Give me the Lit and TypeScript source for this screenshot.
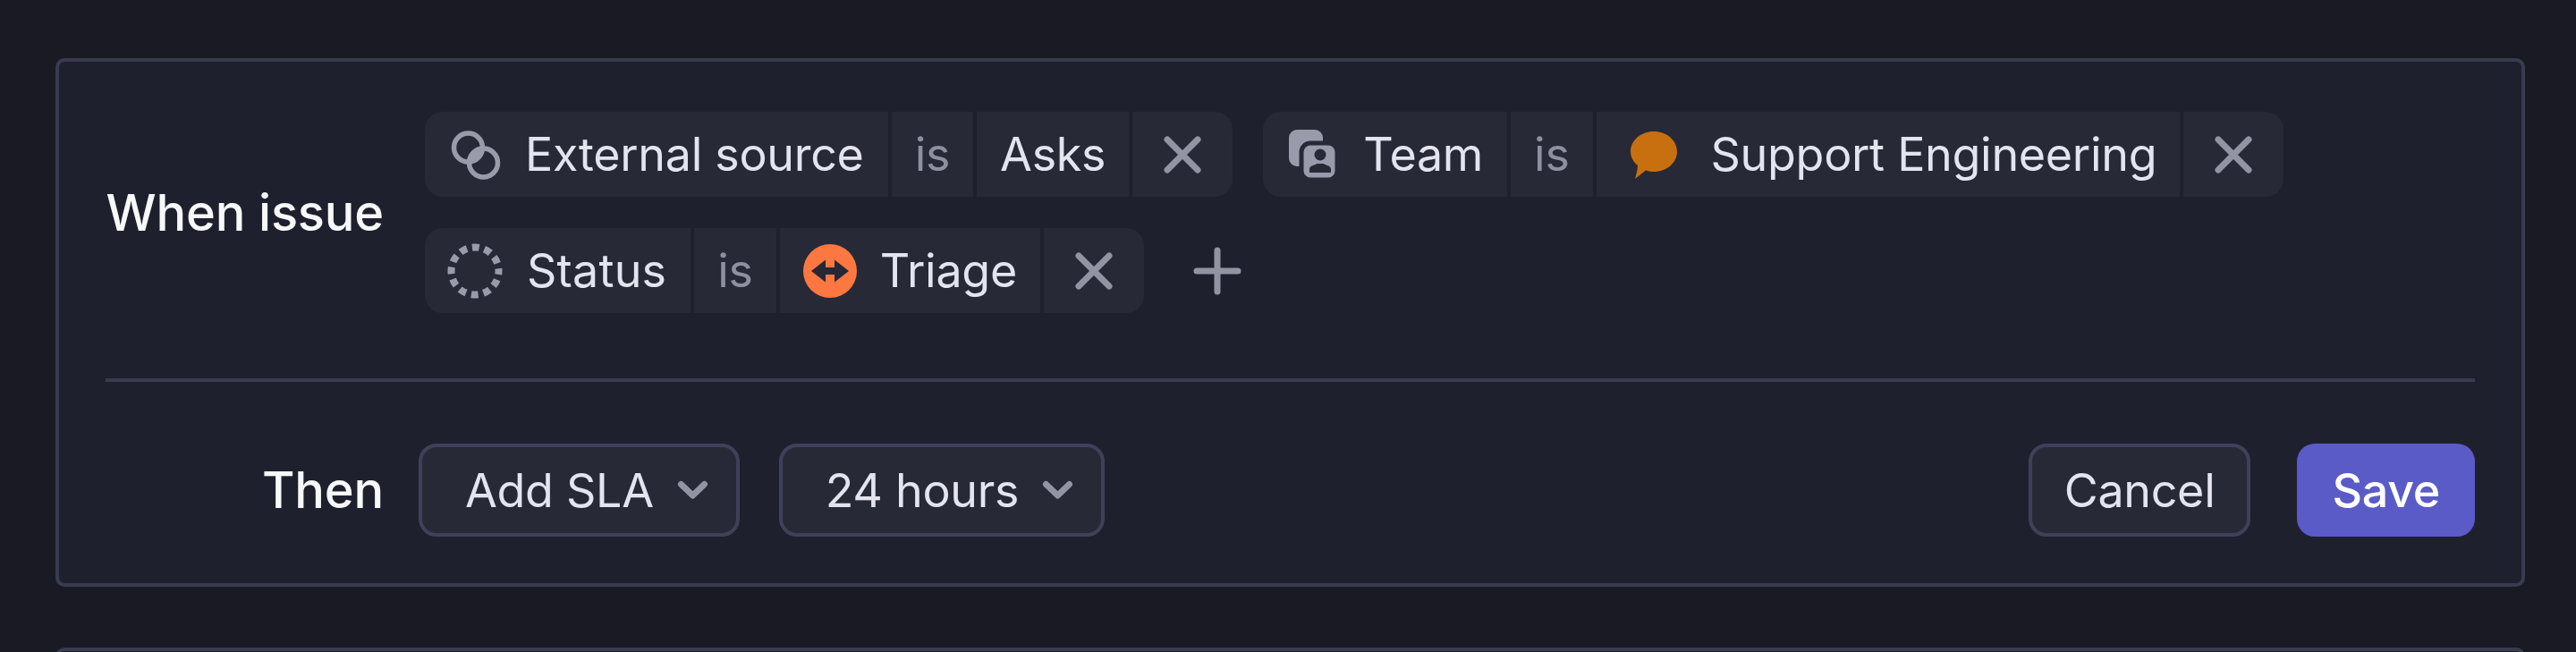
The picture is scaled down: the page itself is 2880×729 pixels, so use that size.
import { LitElement, html, css } from "lit";
import { customElement } from "lit/decorators.js";

const xIcon = html`<svg width="56" height="56" viewBox="0 0 56 56"><path d="M11 11 L45 45 M45 11 L11 45" stroke="#9394a3" stroke-width="7" stroke-linecap="round" fill="none"/></svg>`;
const plusIcon = html`<svg width="56" height="56" viewBox="0 0 56 56"><path d="M28 5 V51 M5 28 H51" stroke="#9394a3" stroke-width="7" stroke-linecap="round" fill="none"/></svg>`;
const chevron = html`<svg width="33" height="20" viewBox="0 0 33 20"><path d="M3.5 3.5 L16.5 16 L29.5 3.5" stroke="#9394a3" stroke-width="7" stroke-linecap="round" stroke-linejoin="round" fill="none"/></svg>`;
const sourceIcon = html`<svg width="56" height="56" viewBox="0 0 56 56"><defs><clipPath id="c1"><circle cx="20.5" cy="20" r="16"/></clipPath></defs><circle cx="20.5" cy="20" r="16" fill="none" stroke="#9a9baa" stroke-width="5.5"/><circle cx="37.5" cy="37" r="16" fill="none" stroke="#9a9baa" stroke-width="5.5"/><circle cx="37.5" cy="37" r="16" fill="#9a9baa" clip-path="url(#c1)"/></svg>`;
const teamIcon = html`<svg width="56" height="56" viewBox="0 0 56 56"><rect x="1" y="0" width="38" height="41" rx="9" fill="#9a9baa"/><rect x="15" y="15" width="40" height="41" rx="10" fill="#9a9baa" stroke="#272936" stroke-width="5"/><circle cx="36" cy="28" r="6.5" fill="#272936"/><path d="M24 48 V44 C24 40 30 40 32 38 H40 C42 40 48 40 48 44 V48 Z" fill="#272936"/></svg>`;
const bubbleIcon = html`<svg width="56" height="56" viewBox="0 0 56 56"><path d="M28 2 C42.4 2 54 12 54 24.5 C54 37 42.4 47 28 47 C25 47 22 46.5 19 45.5 L7 55 C8.5 50 10 44 10 40 C5 36 2 30.5 2 24.5 C2 12 13.6 2 28 2 Z" fill="#c8700f"/></svg>`;
const triageIcon = html`<svg width="60" height="60" viewBox="0 0 60 60"><circle cx="30" cy="30" r="30" fill="#fc7840"/><path d="M9 30 L25 17.5 V26 H35 V17.5 L51 30 L35 42.5 V34 H25 V42.5 Z" fill="#262836"/></svg>`;
const dots = html`<svg class="dots" width="62" height="62" viewBox="0 0 62 62"><circle cx="31" cy="31" r="26.5" fill="none" stroke="#9a9baa" stroke-width="8" stroke-dasharray="8 5.877" stroke-dashoffset="4"/></svg>`;

@customElement("app-root")
export class AppRoot extends LitElement {
  static styles = css`
    :host {
      display: block;
      width: 2880px;
      height: 729px;
      overflow: hidden;
      background: #191a23;
      font-family: Inter, "Noto Sans", sans-serif;
      font-size: 52px;
      letter-spacing: -0.3px;
      color: #e3e4f0;
      filter: blur(0.7px);
    }
    .page {
      padding: 65px 57px 0 62px;
      display: flex;
      flex-direction: column;
      gap: 68px;
    }
    .card {
      box-sizing: border-box;
      height: 591px;
      background: #1f202d;
      border: 4px solid #393b4e;
      border-radius: 10px;
      padding: 56px 52px;
      display: flex;
      flex-direction: column;
      flex: none;
    }
    .next {
      height: 40px;
      flex: none;
      background: #1f202d;
      border: 4px solid #393b4e;
      border-radius: 10px;
    }
    .when { display: flex; align-items: center; }
    .label {
      width: 311px;
      flex: none;
      text-align: right;
      font-size: 56px;
      font-weight: 500;
      letter-spacing: -0.2px;
      color: #f7f8f8;
      line-height: 68px;
      white-space: nowrap;
    }
    .chips {
      margin-left: 46px;
      display: flex;
      flex-wrap: wrap;
      gap: 35px 34px;
      align-items: center;
    }
    .chip { display: flex; gap: 4px; height: 95px; border-radius: 20px; overflow: hidden; }
    .seg {
      display: flex;
      align-items: center;
      gap: 26px;
      padding: 0 26px;
      background: #272936;
      white-space: nowrap;
      line-height: 95px;
    }
    .name { gap: 28px; padding: 0 27px 0 28px; }
    .is { color: #8e8f9f; }
    .x { padding: 0 28px; }
    .plus { display: flex; margin-left: 20px; height: 95px; align-items: center; }
    .bubble { padding-left: 36px; gap: 36px; }
    svg { flex: none; display: block; overflow: visible; }
    .dots { margin: 0 -1px 0 -3px; }
    .dots + span { letter-spacing: 0.2px; }
    hr {
      border: 0;
      flex: none;
      height: 4px;
      margin: 73px 0 69px;
      background: #393b4e;
    }
    .then { display: flex; align-items: center; }
    .then .sel { margin-left: 39px; }
    .then .sel + .sel { margin-left: 44px; }
    .btn {
      box-sizing: border-box;
      height: 104px;
      display: flex;
      align-items: center;
      border-radius: 20px;
      white-space: nowrap;
    }
    .sel, .cancel {
      background: #282936;
      border: 4px solid #3f4159;
    }
    .sel { padding: 0 32px 0 48px; gap: 27px; }
    .cancel { padding: 0 36px; margin-left: auto; }
    .save {
      margin-left: 52px;
      padding: 0 39px;
      background: #5a5bc6;
      color: #fff;
      font-weight: 500;
    }
  `;

  private chip(icon: unknown, name: string, value: string, valueIcon?: unknown, cls = "") {
    return html`<div class="chip">
      <div class="seg name">${icon}<span>${name}</span></div>
      <div class="seg is">is</div>
      <div class="seg ${cls}">${valueIcon ?? ""}<span>${value}</span></div>
      <div class="seg x">${xIcon}</div>
    </div>`;
  }

  render() {
    return html`<div class="page">
      <div class="card">
        <div class="when">
          <div class="label">When issue</div>
          <div class="chips">
            ${this.chip(sourceIcon, "External source", "Asks")}
            ${this.chip(teamIcon, "Team", "Support Engineering", bubbleIcon, "bubble")}
            ${this.chip(dots, "Status", "Triage", triageIcon)}
            <div class="plus">${plusIcon}</div>
          </div>
        </div>
        <hr />
        <div class="then">
          <div class="label">Then</div>
          <div class="btn sel"><span>Add SLA</span>${chevron}</div>
          <div class="btn sel"><span>24 hours</span>${chevron}</div>
          <div class="btn cancel">Cancel</div>
          <div class="btn save">Save</div>
        </div>
      </div>
      <div class="next"></div>
    </div>`;
  }
}
